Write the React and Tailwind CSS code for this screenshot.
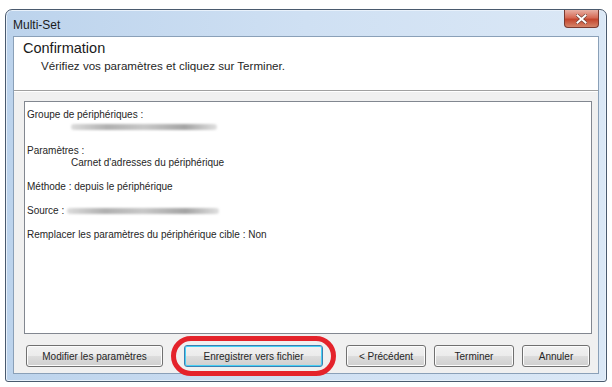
export default function App() {
  const font = { fontFamily: '"Liberation Sans", Arial, sans-serif' };

  return (
    <div className="w-[612px] h-[387px] bg-white overflow-hidden" style={font}>
      {/* window frame */}
      <div className="ml-[5px] mt-[9px] w-[602px] h-[373px] rounded-t-[7px] rounded-b-[3px] border border-[#4a5a6e] bg-[linear-gradient(to_right,#bcd3ec,#cfe0f3_50%,#dbe8f6)] flex flex-col shadow-[inset_0_0_0_1px_#e8f1fb]">
        {/* title bar */}
        <div className="h-[26px] flex items-center justify-between pl-[7px] pr-[7px]">
          <span className="text-[12px] text-[#1b1b1b] mt-[3px]">Multi-Set</span>
          <div className="self-start w-[35px] h-[18px] rounded-b-[4px] border border-t-0 border-[#7a3a30] bg-[linear-gradient(to_bottom,#e8b0a4,#d66a55_45%,#c4462e_55%,#d5856a)] flex items-center justify-center">
            <svg width="11" height="10" viewBox="0 0 11 10">
              <path d="M1.5 1.5 L9.5 8.5 M9.5 1.5 L1.5 8.5" stroke="#6a3a30" strokeWidth="3.2" strokeLinecap="square" />
              <path d="M1.5 1.5 L9.5 8.5 M9.5 1.5 L1.5 8.5" stroke="#ffffff" strokeWidth="2" strokeLinecap="square" />
            </svg>
          </div>
        </div>

        {/* client area */}
        <div className="flex-1 mx-[7px] mb-[7px] border border-[#8aa0b8] bg-[#f0f0f0] flex flex-col">
          {/* header */}
          <div className="h-[54px] bg-white border-b border-[#a0a0a0] shadow-[0_1px_0_#ffffff] px-[9px] pt-[1px]">
            <div className="text-[14.5px] text-[#1a1a1a] leading-[20px]">Confirmation</div>
            <div className="text-[11.6px] text-[#262626] leading-[14px] pl-[18px] mt-[1px]">
              Vérifiez vos paramètres et cliquez sur Terminer.
            </div>
          </div>

          {/* list box */}
          <div className="mt-[10px] ml-[10px] mr-[6px] h-[233px] bg-white border border-[#828790] px-[2px] pt-[7px] text-[10px] leading-[12px] text-[#262626]">
            <div>Groupe de périphériques :</div>
            <div className="pl-[44px] h-[12px] flex items-center">
              <div className="w-[146px] h-[6px] rounded-full bg-[linear-gradient(to_right,#dcdcdc,#b0b0b0_25%,#c8c8c8_50%,#a4a4a4_78%,#e0e0e0)] blur-[1px]" />
            </div>
            <div className="h-[12px]" />
            <div>Paramètres :</div>
            <div className="pl-[44px]">Carnet d'adresses du périphérique</div>
            <div className="h-[12px]" />
            <div>Méthode : depuis le périphérique</div>
            <div className="h-[12px]" />
            <div className="flex items-center">
              <span>Source :</span>
              <div className="ml-[3px] w-[152px] h-[6px] rounded-full bg-[linear-gradient(to_right,#dcdcdc,#b0b0b0_25%,#c8c8c8_50%,#a4a4a4_78%,#e0e0e0)] blur-[1px]" />
            </div>
            <div className="h-[12px]" />
            <div>Remplacer les paramètres du périphérique cible : Non</div>
          </div>

          {/* buttons */}
          <div className="flex items-center mt-[11px] ml-[12px] mr-[8px] text-[10px] text-[#262626]">
            <WinButton className="w-[137px]">Modifier les paramètres</WinButton>
            <div className="ml-[8px] rounded-full border-[5px] border-[#e4232b] px-[8px] py-[4px] -my-[9px]">
              <WinButton className="w-[139px]" focused>Enregistrer vers fichier</WinButton>
            </div>
            <div className="ml-auto flex gap-[8px]">
              <WinButton className="w-[80px]">&lt; Précédent</WinButton>
              <WinButton className="w-[80px]">Terminer</WinButton>
              <WinButton className="w-[68px]">Annuler</WinButton>
            </div>
          </div>
        </div>
      </div>
    </div>
  );
}

function WinButton({ children, className = "", focused = false }) {
  return (
    <div
      className={`h-[22px] rounded-[3px] border ${
        focused ? "border-[#3c7fb1] shadow-[inset_0_0_0_1px_#48d0f5]" : "border-[#707070] shadow-[inset_0_0_0_1px_#fcfcfc]"
      } bg-[linear-gradient(to_bottom,#f2f2f2,#ebebeb_50%,#dddddd_51%,#cfcfcf)] flex items-center justify-center ${className}`}
    >
      {children}
    </div>
  );
}
